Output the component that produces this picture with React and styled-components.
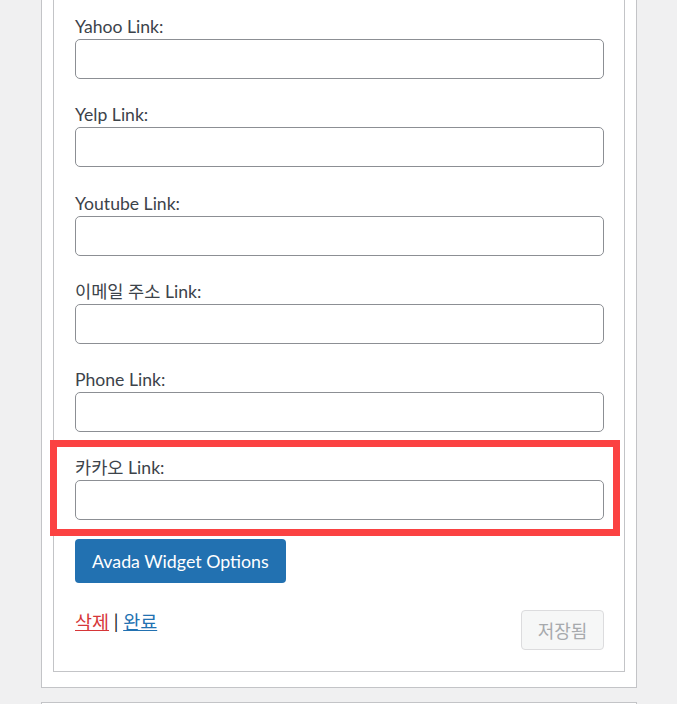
import React from "react";
import styled, { createGlobalStyle } from "styled-components";

const GlobalStyle = createGlobalStyle`
  html, body {
    margin: 0;
    padding: 0;
    background: #f0f0f1;
    overflow: hidden;
  }
  body {
    font-family: Lato, "Noto Sans CJK KR", sans-serif;
    color: #3c434a;
  }
`;

const Page = styled.div`
  width: 677px;
  height: 704px;
  overflow: hidden;
`;

const Widget = styled.div`
  margin: -40px 0 0 41px;
  width: 596px;
  box-sizing: border-box;
  background: #fff;
  border: 1px solid #c3c4c7;
  padding: 0 11px 15px;
`;

const Inside = styled.div`
  border: 1px solid #c3c4c7;
  border-top: none;
  padding: 54px 20px 21px 21px;
`;

const Field = styled.div`
  position: relative;
  margin-bottom: 24.3px;

  ${({ $highlight }) =>
    $highlight &&
    `
    margin-bottom: 19px;
    &::after {
      content: "";
      position: absolute;
      left: -25px;
      right: -16px;
      top: -16px;
      bottom: -16px;
      border: 7px solid #fb4242;
      pointer-events: none;
    }
  `}
`;

const Label = styled.label`
  display: block;
  font-size: 17.6px;
  line-height: 24px;
  color: #3c434a;
`;

const Input = styled.input`
  display: block;
  width: 100%;
  height: 40px;
  box-sizing: border-box;
  border: 1px solid #8c8f94;
  border-radius: 5px;
  background: #fff;
  margin: 0;
`;

const OptionsButton = styled.button`
  height: 44px;
  padding: 0 17px;
  border: none;
  border-radius: 4px;
  background: #2271b1;
  color: #fff;
  font-family: inherit;
  font-size: 17.8px;
`;

const Actions = styled.div`
  display: flex;
  justify-content: space-between;
  align-items: flex-start;
  margin-top: 27px;
`;

const Links = styled.div`
  font-size: 18.5px;
  line-height: 24px;
  color: #1d2327;
`;

const TextLink = styled.a`
  color: ${({ $danger }) => ($danger ? "#d63638" : "#2271b1")};
  text-decoration: underline;
`;

const SaveButton = styled.button`
  width: 83px;
  height: 40px;
  border: 1px solid #dcdcde;
  border-radius: 4px;
  background: #f6f7f7;
  color: #a7aaad;
  font-family: inherit;
  font-size: 18px;
`;

const NextWidget = styled.div`
  margin: 14px 0 0 41px;
  width: 596px;
  height: 40px;
  box-sizing: border-box;
  background: #fff;
  border: 1px solid #c3c4c7;
`;

const fields = [
  { label: "Yahoo Link:" },
  { label: "Yelp Link:" },
  { label: "Youtube Link:" },
  { label: "이메일 주소 Link:" },
  { label: "Phone Link:" },
  { label: "카카오 Link:", highlight: true },
];

export default function App() {
  return (
    <Page>
      <GlobalStyle />
      <Widget>
        <Inside>
          {fields.map(({ label, highlight }) => (
            <Field key={label} $highlight={highlight}>
              <Label>{label}</Label>
              <Input type="text" />
            </Field>
          ))}
          <OptionsButton>Avada Widget Options</OptionsButton>
          <Actions>
            <Links>
              <TextLink href="#" $danger>삭제</TextLink> | <TextLink href="#">완료</TextLink>
            </Links>
            <SaveButton disabled>저장됨</SaveButton>
          </Actions>
        </Inside>
      </Widget>
      <NextWidget />
    </Page>
  );
}
